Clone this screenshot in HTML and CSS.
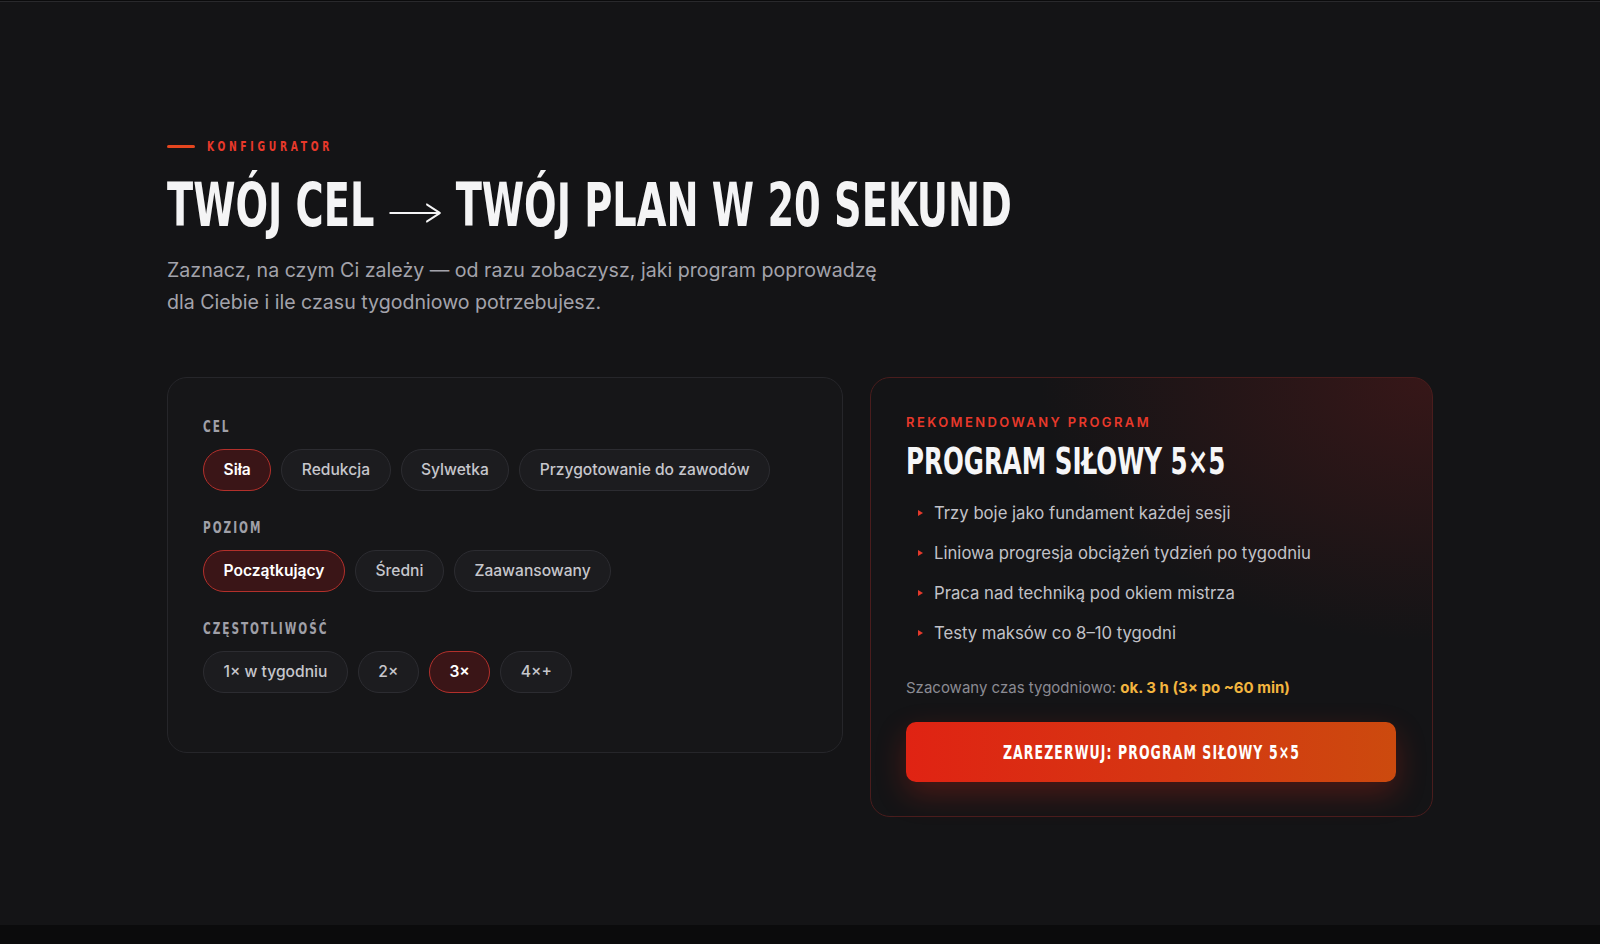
FILE: index.html
```html
<!DOCTYPE html>
<html lang="pl">
<head>
<meta charset="utf-8">
<title>Konfigurator</title>
<link rel="stylesheet" href="styles.css">
</head>
<body>
<section class="configurator">
  <div class="container">
    <div class="eyebrow"><span class="eyebrow-line"></span><span class="eyebrow-text display">KONFIGURATOR</span></div>
    <h1 class="title display">TWÓJ CEL <svg class="arrow" width="73" height="20" viewBox="0 0 73 20" aria-label="→"><path d="M1 10 H71 M53 1.5 L71.5 10 L53 18.5" fill="none" stroke="#f4f4f5" stroke-width="2.2" stroke-linecap="round" stroke-linejoin="round"/></svg> TWÓJ PLAN W 20 SEKUND</h1>
    <p class="lead">Zaznacz, na czym Ci zależy — od razu zobaczysz, jaki program poprowadzę dla Ciebie i ile czasu tygodniowo potrzebujesz.</p>

    <div class="grid">
      <div class="card options">
        <div class="group">
          <div class="group-label display">CEL</div>
          <div class="chips">
            <button class="chip active">Siła</button>
            <button class="chip">Redukcja</button>
            <button class="chip">Sylwetka</button>
            <button class="chip">Przygotowanie do zawodów</button>
          </div>
        </div>
        <div class="group">
          <div class="group-label display">POZIOM</div>
          <div class="chips">
            <button class="chip active">Początkujący</button>
            <button class="chip">Średni</button>
            <button class="chip">Zaawansowany</button>
          </div>
        </div>
        <div class="group">
          <div class="group-label display">CZĘSTOTLIWOŚĆ</div>
          <div class="chips">
            <button class="chip">1× w tygodniu</button>
            <button class="chip">2×</button>
            <button class="chip active">3×</button>
            <button class="chip">4×+</button>
          </div>
        </div>
      </div>

      <div class="card result">
        <div class="result-label">REKOMENDOWANY PROGRAM</div>
        <h2 class="result-title display">PROGRAM SIŁOWY 5×5</h2>
        <ul class="features">
          <li>Trzy boje jako fundament każdej sesji</li>
          <li>Liniowa progresja obciążeń tydzień po tygodniu</li>
          <li>Praca nad techniką pod okiem mistrza</li>
          <li>Testy maksów co 8–10 tygodni</li>
        </ul>
        <p class="estimate">Szacowany czas tygodniowo: <strong>ok. 3 h (3× po ~60 min)</strong></p>
        <a class="cta" href="#"><span class="cta-text display">ZAREZERWUJ: PROGRAM SIŁOWY 5×5</span></a>
      </div>
    </div>
  </div>
</section>
<footer class="next"></footer>
</body>
</html>
```

FILE: styles.css
```css
* { box-sizing: border-box; }

html, body { margin: 0; padding: 0; }

body {
  background: #0b0b0c;
  font-family: Inter, "Noto Sans", sans-serif;
  color: #e6e6e8;
}

.configurator {
  margin-top: 1px;
  border-top: 1px solid #29292c;
  background: #141416;
  padding: 134px 0 108px;
}

.container {
  width: 1266px;
  margin: 0 auto;
}

/* condensed display face (stand-in for a narrow grotesk) */
.display {
  font-family: "DejaVu Sans Condensed", "DejaVu Sans", sans-serif;
  font-weight: 700;
  transform: scaleX(0.73);
  transform-origin: 0 50%;
}

.eyebrow {
  display: flex;
  align-items: center;
  gap: 12px;
  height: 20px;
}

.eyebrow-line {
  width: 28px;
  height: 3px;
  border-radius: 2px;
  background: #e5461f;
  flex: none;
}

.eyebrow-text {
  font-size: 14px;
  line-height: 20px;
  letter-spacing: 5.1px;
  color: #e8392b;
}

.title {
  margin: 16px 0 0;
  font-size: 60px;
  line-height: 66px;
  color: #f4f4f5;
  transform: scaleX(0.71);
}

.arrow {
  display: inline-block;
  vertical-align: 3px;
  margin: 0 2px;
}

.lead {
  margin: 16px 0 0;
  max-width: 730px;
  font-size: 19.6px;
  line-height: 32px;
  color: #a3a3ab;
}

.grid {
  display: grid;
  grid-template-columns: 676px 563px;
  gap: 27px;
  margin-top: 59px;
  align-items: start;
}

.card {
  border-radius: 20px;
  border: 1px solid #26262a;
}

.options {
  background: #161618;
  padding: 39px 35px 59px;
}

.group + .group { margin-top: 27px; }

.group-label {
  font-size: 16px;
  line-height: 20px;
  letter-spacing: 2.7px;
  color: #a0a0a8;
}

.chips {
  display: flex;
  flex-wrap: wrap;
  gap: 10px;
  margin-top: 12px;
}

.chip {
  height: 42px;
  padding: 0 19.5px;
  border-radius: 21px;
  border: 1px solid #2c2c31;
  background: #1c1c1f;
  color: #c6c6cc;
  font-family: Inter, "Noto Sans", sans-serif;
  font-size: 15.6px;
  font-weight: 500;
  line-height: 22px;
  cursor: pointer;
}

.chip.active {
  background: #3a1517;
  border-color: #b3302b;
  color: #ffffff;
  font-weight: 600;
}

.result {
  border-color: #4a1d1d;
  background:
    radial-gradient(ellipse 70% 60% at 100% 0%, rgba(120, 28, 28, 0.35), rgba(120, 28, 28, 0) 100%),
    #141416;
  padding: 35px 36px 34px 35px;
}

.result-label {
  font-size: 13px;
  line-height: 18px;
  font-weight: 600;
  letter-spacing: 2.4px;
  color: #e8392b;
}

.result-title {
  margin: 8px 0 0;
  font-size: 38px;
  line-height: 44px;
  color: #f6f6f7;
  transform: scaleX(0.718);
}

.features {
  list-style: none;
  margin: 18px 0 0;
  padding: 0 0 0 12px;
  display: flex;
  flex-direction: column;
  gap: 16px;
}

.features li {
  display: flex;
  align-items: center;
  gap: 11px;
  font-size: 16.7px;
  line-height: 24px;
  color: #c2c2c8;
}

.features li::before {
  content: "";
  width: 0;
  height: 0;
  border-left: 5px solid #e5392b;
  border-top: 3.5px solid transparent;
  border-bottom: 3.5px solid transparent;
  flex: none;
}

.estimate {
  margin: 32px 0 0;
  font-size: 15px;
  line-height: 22px;
  color: #8b8b93;
}

.estimate strong {
  color: #f3b53f;
  font-weight: 700;
}

.cta {
  display: flex;
  align-items: center;
  justify-content: center;
  height: 60px;
  margin-top: 23px;
  border-radius: 10px;
  background: linear-gradient(90deg, #e02313 0%, #d53712 55%, #cc4a0e 100%);
  box-shadow: 0 12px 30px rgba(220, 40, 20, 0.28);
  color: #ffffff;
  text-decoration: none;
}

.cta-text {
  display: inline-block;
  font-size: 19px;
  line-height: 24px;
  letter-spacing: 1.5px;
  transform-origin: 50% 50%;
}

.next {
  height: 19px;
  background: #0b0b0c;
}
```
